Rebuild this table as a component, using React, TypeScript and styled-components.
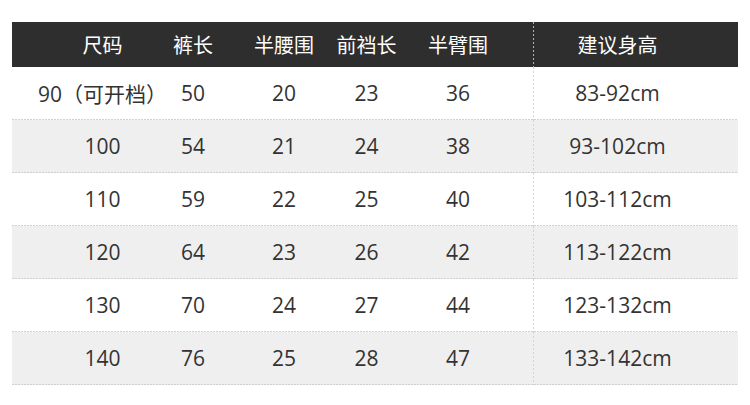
import React from "react";
import styled, { createGlobalStyle } from "styled-components";

const Global = createGlobalStyle`
  html, body { margin: 0; padding: 0; background: #ffffff; }
  body { width: 750px; height: 405px; overflow: hidden; font-family: "Open Sans", "Noto Sans CJK SC", sans-serif; }
`;

const dash = (c: string) =>
  `repeating-linear-gradient(to right, ${c} 0 2px, transparent 2px 3px)`;
const vdash = (c: string) =>
  `repeating-linear-gradient(to bottom, ${c} 0 2px, transparent 2px 4px)`;

const Table = styled.div`
  margin: 22px 0 0 12px;
  width: 726px;
  display: flex;
  flex-direction: column;
`;

const Row = styled.div<{ $variant: "head" | "white" | "grey" }>`
  display: grid;
  grid-template-columns: 91px 90px 92px 73px 130px 205px;
  padding-left: 45px;
  height: ${(p) => (p.$variant === "head" ? "45px" : "53px")};
  background-color: ${(p) =>
    p.$variant === "head" ? "#2e2e2e" : p.$variant === "grey" ? "#efefef" : "#ffffff"};
  background-image: ${(p) => (p.$variant === "head" ? "none" : dash("#d0d0d0"))};
  background-size: 100% 1px;
  background-position: left bottom;
  background-repeat: no-repeat;
  color: ${(p) => (p.$variant === "head" ? "#ffffff" : "#333333")};
  font-size: ${(p) => (p.$variant === "head" ? "20px" : "21px")};
`;

const Cell = styled.div<{ $padRight?: number; $divider?: boolean; $head?: boolean }>`
  display: flex;
  align-items: center;
  justify-content: center;
  white-space: nowrap;
  padding-right: ${(p) => p.$padRight ?? 0}px;
  padding-bottom: ${(p) => (p.$head ? 0 : 1)}px;
  background-image: ${(p) =>
    p.$divider ? vdash(p.$head ? "#b4b4b4" : "#d2d2d2") : "none"};
  background-size: 1px 100%;
  background-position: left top;
  background-repeat: no-repeat;
`;

const columns = [
  { pad: 0 },
  { pad: 0 },
  { pad: 0 },
  { pad: 0 },
  { pad: 20 },
  { pad: 36, divider: true },
];

const header = ["尺码", "裤长", "半腰围", "前裆长", "半臂围", "建议身高"];

const rows = [
  ["90（可开档）", "50", "20", "23", "36", "83-92cm"],
  ["100", "54", "21", "24", "38", "93-102cm"],
  ["110", "59", "22", "25", "40", "103-112cm"],
  ["120", "64", "23", "26", "42", "113-122cm"],
  ["130", "70", "24", "27", "44", "123-132cm"],
  ["140", "76", "25", "28", "47", "133-142cm"],
];

export default function App() {
  return (
    <>
      <Global />
      <Table>
        <Row $variant="head">
          {header.map((h, i) => (
            <Cell key={h} $head $padRight={columns[i].pad} $divider={columns[i].divider}>
              {h}
            </Cell>
          ))}
        </Row>
        {rows.map((r, ri) => (
          <Row key={r[0]} $variant={ri % 2 === 1 ? "grey" : "white"}>
            {r.map((v, i) => (
              <Cell key={i} $padRight={columns[i].pad} $divider={columns[i].divider}>
                {v}
              </Cell>
            ))}
          </Row>
        ))}
      </Table>
    </>
  );
}
